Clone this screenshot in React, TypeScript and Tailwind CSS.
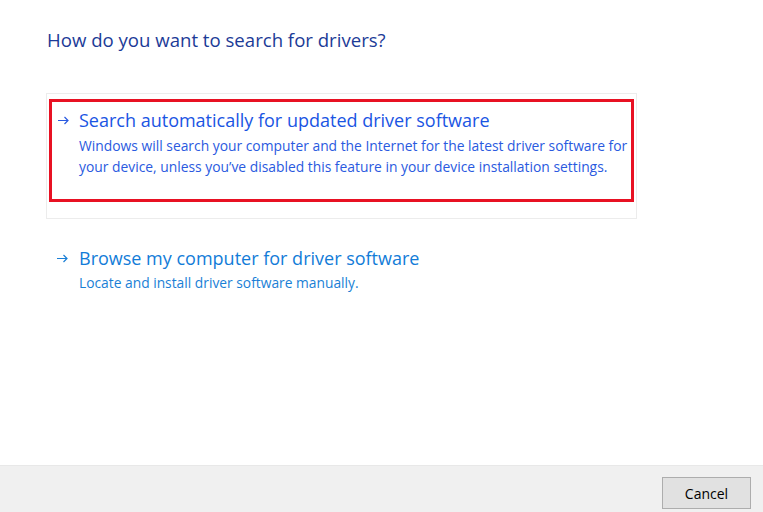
function Arrow({ color }: { color: string }) {
  return (
    <svg width="12" height="9" viewBox="0 0 12 9" className="mt-[9px]" fill="none" stroke={color} strokeWidth="1.2">
      <path d="M1 4.5h10M7.5 1l3.5 3.5-3.5 3.5" />
    </svg>
  );
}

export default function App() {
  return (
    <div
      className="w-[763px] h-[512px] bg-white flex flex-col overflow-hidden"
      style={{ fontFamily: '"Segoe UI", "Open Sans", sans-serif' }}
    >
      <div className="flex-1 pl-[47px] pt-[27px]">
        <h1 className="text-[18.6px] leading-[26px] text-[#1c3b97] font-normal">
          How do you want to search for drivers?
        </h1>

        <div className="mt-[40px] ml-[-1px] w-[591px] h-[126px] border border-[#ececec] pl-[2px] pt-[5px]">
          <div className="w-[585px] h-[103px] border-[3px] border-[#e81123] flex pt-[5px] pl-[5px]">
            <div className="w-[22px] shrink-0">
              <Arrow color="#2a5ae0" />
            </div>
            <div className="flex flex-col">
              <span className="text-[18px] leading-[26px] text-[#1a55e3]">
                Search automatically for updated driver software
              </span>
              <span className="text-[13.85px] leading-[21px] mt-[2px] text-[#2a5ae0]">
                Windows will search your computer and the Internet for the latest driver software for
                <br />
                your device, unless you’ve disabled this feature in your device installation settings.
              </span>
            </div>
          </div>
        </div>

        <div className="flex pl-[9px] mt-[26px]">
          <div className="w-[23px] shrink-0">
            <Arrow color="#1a7fd6" />
          </div>
          <div className="flex flex-col">
            <span className="text-[18px] leading-[26px] text-[#127cd8]">
              Browse my computer for driver software
            </span>
            <span className="text-[13.8px] leading-[21px] mt-[1px] text-[#1a7fd6]">
              Locate and install driver software manually.
            </span>
          </div>
        </div>
      </div>

      <div className="h-[47px] bg-[#f0f0f0] border-t border-[#e8e8e8] flex justify-end items-start pt-[11px] pr-[12px]">
        <button className="w-[89px] h-[32px] bg-[#e1e1e1] border border-[#adadad] text-[14px] text-black">
          Cancel
        </button>
      </div>
    </div>
  );
}
